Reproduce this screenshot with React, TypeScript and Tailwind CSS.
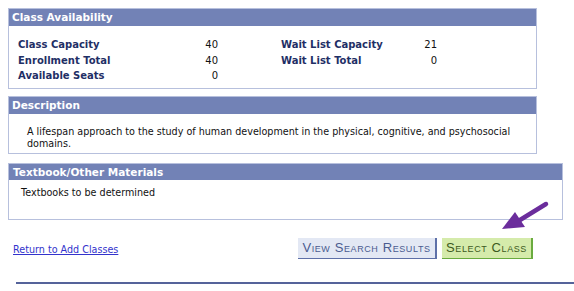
export default function App() {
  const font = "font-['DejaVu_Sans','Verdana',sans-serif]";
  return (
    <div className={`relative w-[574px] h-[291px] bg-white pl-2 pt-2 text-[9.6px] ${font}`}>
      {/* Class Availability */}
      <div className="w-[529px] border border-[#b7c0dd]">
        <div className="h-[17px] bg-[#7282b6] pl-[3px] text-[10.5px] font-bold leading-[17px] text-white">Class Availability</div>
        <div className="pl-[9px] pt-[11px] pb-[4px]">
          {[
            ["Class Capacity", "40", "Wait List Capacity", "21"],
            ["Enrollment Total", "40", "Wait List Total", "0"],
            ["Available Seats", "0", "", ""],
          ].map((r, i) => (
            <div key={i} className="flex h-[15.5px] items-center">
              <div className="w-[182px] text-[10px] font-bold text-[#1f2f66]">{r[0]}</div>
              <div className="w-[18px] text-right text-[10px] text-[#111]">{r[1]}</div>
              <div className="w-[63px]" />
              <div className="w-[139px] text-[10px] font-bold text-[#1f2f66]">{r[2]}</div>
              <div className="w-[17px] text-right text-[10px] text-[#111]">{r[3]}</div>
            </div>
          ))}
        </div>
      </div>

      {/* Description */}
      <div className="mt-[7px] w-[529px] border border-[#b7c0dd]">
        <div className="h-[17px] bg-[#7282b6] pl-[3px] text-[10.5px] font-bold leading-[17px] text-white">Description</div>
        <div className="pl-[18px] pr-[8px] pt-[12px] pb-[3px] leading-[12px] text-[#111]">
          A lifespan approach to the study of human development in the physical, cognitive, and psychosocial domains.
        </div>
      </div>

      {/* Textbook */}
      <div className="mt-[9px] w-[555px] border border-[#b7c0dd]">
        <div className="h-[16px] bg-[#7282b6] pl-[4px] text-[10.5px] font-bold leading-[16px] text-white">Textbook/Other Materials</div>
        <div className="h-[39px] pl-[12px] pt-[7px] leading-[12px] text-[#111]">Textbooks to be determined</div>
      </div>

      {/* Actions */}
      <div className="mt-[18px] flex w-[525px] items-center justify-between">
        <a href="#" className="ml-[5px] mt-[5px] text-[#3333cc] underline">Return to Add Classes</a>
        <div className="flex gap-[5px]">
          <button className="h-[21px] w-[139px] border-r-2 border-b border-[#5e70a8] bg-[#e3e8f4] font-['Liberation_Sans',Arial,sans-serif] text-[13px] tracking-[0.6px] text-[#4a5b90] [font-variant:small-caps]">
            View Search Results
          </button>
          <button className="h-[21px] w-[91px] border-r-2 border-b border-[#6aab3f] bg-[#d5ebab] font-['Liberation_Sans',Arial,sans-serif] text-[13px] tracking-[0.6px] text-[#3c5a20] [font-variant:small-caps]">
            Select Class
          </button>
        </div>
      </div>

      <div className="mt-[23px] ml-[8px] h-[2px] bg-[#55639a]" />

      {/* Arrow annotation */}
      <svg className="absolute left-[496px] top-[198px]" width="60" height="40" viewBox="0 0 60 40">
        <path d="M50 6 L24 22" stroke="#6b2d9c" strokeWidth="4.5" strokeLinecap="round" />
        <path d="M6 31 L19 14 L29 29 Z" fill="#6b2d9c" />
      </svg>
    </div>
  );
}
